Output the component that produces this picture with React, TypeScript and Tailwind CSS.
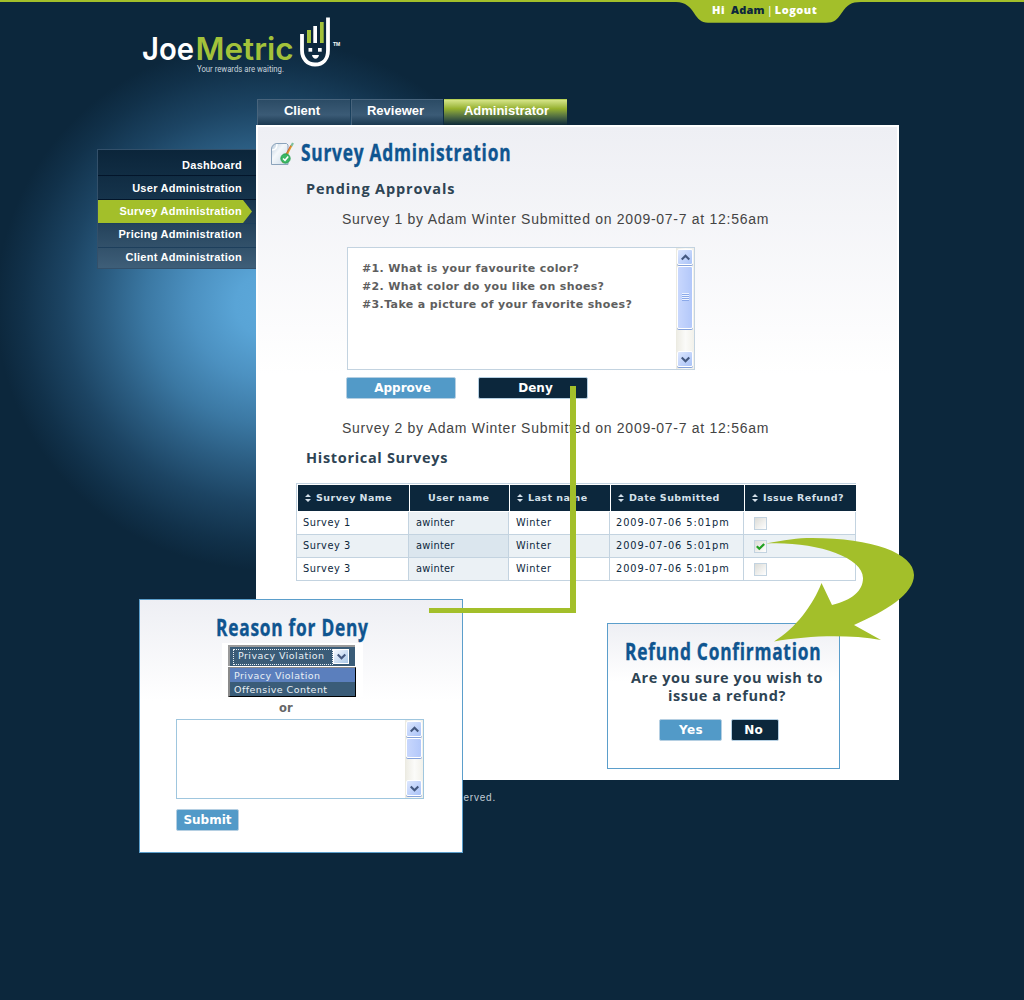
import React from "react";

const HELV = "font-['Liberation_Sans',Arial,sans-serif]";
const VERD = "font-['DejaVu_Sans',Verdana,sans-serif]";
const MYRIAD = "font-['Open_Sans','Noto_Sans',sans-serif]";
const TITLE = "origin-left scale-x-[0.753] text-[23px] font-bold tracking-[1px] whitespace-nowrap text-[#0f5590] [-webkit-text-stroke:0.4px_#0f5590]";

function Logo() {
  return (
    <svg width="204" height="60" viewBox="140 15 204 60" className="block">
      <g fontFamily="Inter, sans-serif" fontWeight="600" fontSize="31">
        <text x="142" y="60" fill="#fff" textLength="52" lengthAdjust="spacingAndGlyphs">Joe</text>
        <text x="195.500" y="60" fill="#a3c23a" textLength="98" lengthAdjust="spacingAndGlyphs">Metric</text>
      </g>
      <text x="197" y="71.500" fill="#c9d5de" fontFamily="Roboto, sans-serif" fontSize="8.200" textLength="87" lengthAdjust="spacingAndGlyphs">
        Your rewards are waiting.
      </text>
      <path d="M302 34V50C302 59 307.500 64.500 315 64.500C323 64.500 328 59 328 50V17.500" fill="none" stroke="#fff" strokeWidth="3.800" />
      <rect x="307" y="30" width="4" height="13" fill="#a3c23a" />
      <rect x="313.300" y="26" width="3.700" height="17" fill="#fff" />
      <rect x="320" y="22" width="3.700" height="21" fill="#a3c23a" />
      <rect x="308.500" y="48" width="3.700" height="3.700" fill="#fff" />
      <rect x="318" y="48" width="3.700" height="3.700" fill="#fff" />
      <path d="M312 55H319C318 60 313 60 312 55Z" fill="#fff" />
      <text x="333" y="46" fill="#fff" fontFamily="Liberation Sans, sans-serif" fontWeight="700" fontSize="5">TM</text>
    </svg>
  );
}

function UserBar() {
  return (
    <div className="relative h-[24px] w-[200px]">
      <svg width="200" height="24" viewBox="670 0 200 24" className="absolute inset-0">
        <path d="M670 0V2H676C686 2.500 690 7 694 13C698 19 701 22.700 708 22.700H826C834 22.700 837 20 842 12.500C847 5 851 2 861 2H870V0Z" fill="#a3bf2a" />
      </svg>
      <div className="relative flex h-[20px] items-center pl-[42px] font-['Open_Sans',sans-serif] text-[11px] font-extrabold whitespace-pre text-white">
        <span className="tracking-[0.5px]">Hi</span>
        <span className="ml-[6px] tracking-[0.200px] text-[#0c273c]">Adam</span>
        <span className="mr-[2px] ml-[2px] font-normal">|</span>
        <span className="tracking-[0.500px]">Logout</span>
      </div>
    </div>
  );
}

function PageIcon() {
  return (
    <svg width="24" height="26" viewBox="0 0 24 26" className="mt-[4px] block">
      <defs>
        <linearGradient id="sheet" x1="0" y1="0" x2="1" y2="1">
          <stop offset="0" stopColor="#b9cbdc" />
          <stop offset="0.400" stopColor="#f4f8fb" />
          <stop offset="1" stopColor="#c9d8e6" />
        </linearGradient>
      </defs>
      <path d="M7 1.500H16.500L18 3V22.500H1.500V7C1.500 4 4 1.500 7 1.500Z" fill="url(#sheet)" stroke="#8ba3bb" strokeLinejoin="round" />
      <path d="M2 8C5 8 7 6 7 2" fill="none" stroke="#fff" strokeWidth="1.500" />
      <path d="M21.500 3.500L12.500 20.500" stroke="#e09a2a" strokeWidth="1.900" />
      <path d="M20.800 3.200L16 12" stroke="#c0392b" strokeWidth="0.600" />
      <path d="M23 1L21.300 4" stroke="#7fbf9d" strokeWidth="2.200" />
      <circle cx="15.500" cy="16.500" r="4.700" fill="#3cb765" stroke="#1f9b48" strokeWidth="0.800" />
      <path d="M13 16.500L15 18.300L18.200 14.500" fill="none" stroke="#fff" strokeWidth="1.500" />
    </svg>
  );
}

function ScrollArrow({ up }: { up?: boolean }) {
  return (
    <div className="flex h-[16px] w-[16px] shrink-0 items-center justify-center rounded-[2px] border border-white bg-gradient-to-br from-[#dde7fe] to-[#a9c2f7] shadow-[0_1px_0_#86a3dc]">
      <svg width="9" height="7" viewBox="0 0 9 7">
        <path d={up ? "M0.700 5.500L4.500 1.800L8.300 5.500" : "M0.700 1.500L4.500 5.200L8.300 1.500"} fill="none" stroke="#44587f" strokeWidth="2.200" />
      </svg>
    </div>
  );
}

function ScrollBar({ big }: { big?: boolean }) {
  return (
    <div className="flex h-full w-[18px] flex-col items-start border-l border-[#ecebe2] bg-gradient-to-r from-[#eeede5] via-[#fbfbf9] to-[#f2f1ea] pt-px pb-[2px]">
      <ScrollArrow up />
      <div className={`${big ? "h-[63px]" : "h-[20px]"} mt-px flex w-[16px] shrink-0 flex-col items-center justify-center gap-px rounded-[2px] border border-white bg-gradient-to-r from-[#c8d7fd] to-[#b3c8fa] shadow-[0_1px_0_#86a3dc]`}>
        {big && [0, 1, 2, 3].map((i) => <i key={i} className="h-px w-[7px] bg-[#8ba9ea] shadow-[0_-1px_0_#eef3ff]" />)}
      </div>
      <div className="flex-1" />
      <ScrollArrow />
    </div>
  );
}

function Button({ dark, className, children }: { dark?: boolean; className: string; children: React.ReactNode }) {
  return (
    <button className={`${VERD} ${dark ? "bg-[#0c273c]" : "bg-[#529ac8]"} flex h-[22px] items-center justify-center rounded-[2px] border border-[#b5cfe2] pb-px text-[12px] font-bold whitespace-nowrap text-white ${className}`}>
      {children}
    </button>
  );
}

const menu = ["Dashboard", "User Administration", "Survey Administration", "Pricing Administration", "Client Administration"];

function SideItem({ label, i }: { label: string; i: number }) {
  const heights = ["h-[26px] pt-[5px]", "h-[24px] pt-[2px]", "h-[24px]", "h-[24px] pb-[2px]", "h-[21px] pb-px"];
  return (
    <div className={`relative flex items-center justify-end border-b pr-[14px] ${heights[i]} ${i < 2 ? "border-[#03152a]" : i < 4 ? "border-[#1d3f5c]" : "border-[#33506a]"}`}>
      {i === 2 && (
        <svg width="154" height="23" viewBox="0 0 154 23" className="absolute top-0 left-0">
          <path d="M0 0H145L154 11.500L145 23H0Z" fill="#a3bf2a" />
        </svg>
      )}
      <span className={`${HELV} relative text-[11px] leading-none font-bold tracking-[0.270px] whitespace-nowrap text-white`}>{label}</span>
    </div>
  );
}

function SortIcon() {
  return (
    <svg width="6" height="8" viewBox="0 0 6 8" className="shrink-0">
      <path d="M0 3L3 0L6 3ZM0 5L3 8L6 5Z" fill="#d5e0ea" />
    </svg>
  );
}

const columns = ["Survey Name", "User name", "Last name", "Date Submitted", "Issue Refund?"];
const rows = ["Survey 1", "Survey 3", "Survey 3"];

function SurveyTable() {
  return (
    <div className="w-[560px] border-t border-l border-[#c3d3e0]">
      <div className="mt-px mb-px ml-px grid h-[26px] grid-cols-[112px_100px_101px_134px_111px] bg-white">
        {columns.map((c, i) => (
          <div key={c} className={`flex items-center gap-[5px] bg-[#0c273c] ${i < 4 ? "border-r border-white" : ""} ${i === 1 ? "pl-[18px]" : "pl-[7px]"}`}>
            {i !== 1 && <SortIcon />}
            <span className={`${VERD} text-[9.500px] leading-none font-bold tracking-[0.450px] whitespace-nowrap text-[#d5e0ea]`}>{c}</span>
          </div>
        ))}
      </div>
      {rows.map((r, i) => (
        <div key={i} className={`${VERD} grid h-[23px] grid-cols-[112px_100px_101px_134px_112px] text-[9.800px] tracking-[0.550px] whitespace-nowrap text-[#0c273c] [&>div]:flex [&>div]:items-center [&>div]:border-r [&>div]:border-b [&>div]:border-[#c3d3e0] [&>div]:pl-[6px] [&>div>b]:font-normal ${i === 1 ? "bg-[#ebf1f5]" : "bg-white"}`}>
          <div><b>{r}</b></div>
          <div className={i === 1 ? "bg-[#dbe6ee]" : "bg-[#ebf1f5]"}>
            <b className="pl-px tracking-[0.250px]">awinter</b>
          </div>
          <div><b className="pl-px">Winter</b></div>
          <div><b className="tracking-[0.930px]">2009-07-06 5:01pm</b></div>
          <div>
            <span className="mt-px ml-[4px] flex h-[13px] w-[13px] items-center justify-center border border-[#c3d3e0] bg-gradient-to-br from-[#dcdcd7] to-white">
              {i === 1 && (
                <svg width="9" height="8" viewBox="0 0 9 8">
                  <path d="M0.800 3.200L3.300 5.800L8.200 1" fill="none" stroke="#21a121" strokeWidth="2.200" />
                </svg>
              )}
            </span>
          </div>
        </div>
      ))}
    </div>
  );
}

function DenyDialog() {
  return (
    <div className="absolute top-[599px] left-[139px] flex h-[254px] w-[324px] flex-col border border-[#5b9ecb] bg-gradient-to-b from-[#eeeff4] to-white to-40%">
      <h2 className={`${MYRIAD} ${TITLE} mt-[11px] ml-[76px] h-[32px] leading-[32px]`}>Reason for Deny</h2>
      <div className={`${VERD} ml-[82px] h-[54px] w-[141px] shrink-0 bg-white pt-[2px] pl-[6px] text-[9.500px] tracking-[0.450px] whitespace-nowrap text-[#e9f0f5]`}>
        <div className="flex h-[21px] w-[127px] items-center border-t-2 border-l-2 border-[#9a9a9a] bg-[#3a5c78] pr-[3px] pl-[3px]">
          <span className="flex h-[16px] w-[100px] items-center border border-dotted border-[#e9f0f5] pb-px pl-[4px]">Privacy Violation</span>
          <span className="flex h-[15px] w-[16px] items-center justify-center border border-white bg-gradient-to-br from-[#f5f8ff] to-[#a9c8e8]">
            <svg width="9" height="7" viewBox="0 0 9 7">
              <path d="M0.700 1.500L4.500 5.200L8.300 1.500" fill="none" stroke="#44587f" strokeWidth="2.200" />
            </svg>
          </span>
        </div>
        <div className="mt-px h-[30px] w-[128px] border-t border-r border-b border-l-2 border-t-[#8a8a8a] border-r-black border-b-black border-l-[#8a8a8a] bg-[#3a5c78]">
          <div className="h-[14px] bg-[#5b7fbd] pl-[4px] leading-[15px]">Privacy Violation</div>
          <div className="h-[14px] pl-[4px] leading-[15px]">Offensive Content</div>
        </div>
      </div>
      <span className={`${VERD} mt-[3px] ml-[139px] h-[16px] text-[11.500px] leading-[16px] font-bold text-[#666]`}>or</span>
      <div className="mt-[3px] ml-[36px] flex h-[80px] w-[248px] shrink-0 justify-end border border-[#9fc6de] bg-white">
        <ScrollBar />
      </div>
      <Button className="mt-[10px] ml-[36px] w-[63px] shrink-0">Submit</Button>
    </div>
  );
}

function RefundDialog() {
  return (
    <div className="absolute top-[623px] left-[607px] flex h-[146px] w-[233px] flex-col border border-[#5b9ecb] bg-gradient-to-b from-[#eeeff4] to-white to-40%">
      <h2 className={`${MYRIAD} ${TITLE} mt-[11px] ml-[17px] h-[32px] leading-[32px]`}>Refund Confirmation</h2>
      <p className={`${MYRIAD} mt-[2px] ml-[8px] w-[222px] text-center text-[14.500px] leading-[18px] font-bold tracking-[0.580px] whitespace-nowrap text-[#2e4454]`}>
        Are you sure you wish to<br />issue a refund?
      </p>
      <div className="mt-[14px] ml-[51px] flex gap-[9px]">
        <Button className="w-[63px] pl-px tracking-[0.300px]">Yes</Button>
        <Button dark className="w-[48px] pr-[3px]">No</Button>
      </div>
    </div>
  );
}

export default function App() {
  return (
    <div className="relative h-[1000px] w-[1024px] overflow-hidden bg-[#0c273c] bg-[radial-gradient(ellipse_272px_265px_at_268px_305px,#5ca8da_0%,#59a4d6_12%,#4c91c1_28%,#3b78a3_45%,#2b5d82_60%,#1c4463_75%,#11314a_90%,#0c273c_100%)]">
      <div className="h-[2px] bg-[#a3bf2a]" />
      <header className="-mt-[2px] flex h-[99px] justify-between">
        <div className="pt-[15px] pl-[140px]">
          <Logo />
        </div>
        <div className="pr-[154px]">
          <UserBar />
        </div>
      </header>

      <nav className={`${HELV} ml-[257px] flex h-[26px] gap-px text-[13px] font-bold text-white [&>div]:flex [&>div]:justify-center [&>div]:pt-px [&>div]:leading-[19px]`}>
        <div className="w-[93px] border-t border-l border-[#48647c] bg-gradient-to-b from-[#2b4b65] via-[#3b5b76] via-60% to-[#1b3950] pr-[4px]">Client</div>
        <div className="w-[92px] border-t border-l border-[#48647c] bg-gradient-to-b from-[#2b4b65] via-[#3b5b76] via-60% to-[#1b3950] pr-[4px]">Reviewer</div>
        <div className="w-[123px] border-t border-[#b6cf55] bg-gradient-to-b from-[#d5e486] via-[#96b12c] via-35% to-[#0f2a38] pl-[2px]">Administrator</div>
      </nav>

      <div className="flex items-start">
        <aside className="mt-[24px] ml-[97px] w-[159px] border-t border-l border-[#33506a] bg-gradient-to-b from-[#0b253a] via-[#15334b] via-40% to-[#3f5f79]">
          {menu.map((m, i) => <SideItem key={m} label={m} i={i} />)}
        </aside>
        <main className="flex h-[655px] w-[643px] flex-col items-start border-2 border-white bg-white bg-gradient-to-b from-[#eeeff4] to-white to-[38%]">
          <div className="flex h-[52px] items-center pl-[12px]">
            <PageIcon />
            <h1 className={`${MYRIAD} ${TITLE} ml-[7px] pb-px`}>Survey Administration</h1>
          </div>
          <h2 className={`${MYRIAD} h-[20px] pl-[48px] text-[14.500px] leading-[20px] font-bold tracking-[0.850px] whitespace-nowrap text-[#2e4454]`}>Pending Approvals</h2>
          <p className={`${HELV} h-[40px] pl-[84px] text-[14px] leading-[40px] tracking-[0.720px] whitespace-nowrap text-[#444]`}>Survey 1 by Adam Winter Submitted on 2009-07-7 at 12:56am</p>
          <div className="mt-[8px] ml-[89px] flex h-[123px] w-[348px] justify-between border border-[#c3d3e0] bg-white">
            <div className={`${VERD} pt-[12px] pl-[14px] text-[11px] leading-[18px] font-bold tracking-[0.370px] whitespace-nowrap text-[#5e5e5e]`}>
              <p>#1. What is your favourite color?</p>
              <p>#2. What color do you like on shoes?</p>
              <p>#3.Take a picture of your favorite shoes?</p>
            </div>
            <ScrollBar big />
          </div>
          <div className="mt-[7px] ml-[88px] flex gap-[22px]">
            <Button className="w-[110px] pl-[3px]">Approve</Button>
            <Button dark className="w-[110px] pl-[5px]">Deny</Button>
          </div>
          <p className={`${HELV} mt-[19px] h-[20px] pl-[84px] text-[14px] leading-[20px] tracking-[0.720px] whitespace-nowrap text-[#444]`}>Survey 2 by Adam Winter Submitted on 2009-07-7 at 12:56am</p>
          <h2 className={`${MYRIAD} mt-[10px] h-[20px] pl-[48px] text-[14.500px] leading-[20px] font-bold tracking-[0.680px] whitespace-nowrap text-[#2e4454]`}>Historical Surveys</h2>
          <div className="mt-[15px] ml-[38px]">
            <SurveyTable />
          </div>
        </main>
      </div>

      <footer className={`${HELV} mt-[9px] flex h-[16px] w-[496px] items-center justify-end text-[10px] tracking-[0.800px] text-[#c2cdd6]`}>reserved.</footer>

      <DenyDialog />
      <RefundDialog />

      <svg width="490" height="260" viewBox="428 385 490 260" className="absolute top-[385px] left-[428px]">
        <path d="M570 386H576V613H429V608H570Z" fill="#a3bf2a" />
        <path d="M766 543.500C784 540 798 538 812 538C872 538 914 553 914 575C914 594 886 611 854 625L881 640C846 634 806 636 774 641.500C796 628 813 605 821.500 583L832 605C852 600 863 591 863 578C863 556 812 541 766 543.500Z" fill="#a3bf2a" />
      </svg>
    </div>
  );
}
